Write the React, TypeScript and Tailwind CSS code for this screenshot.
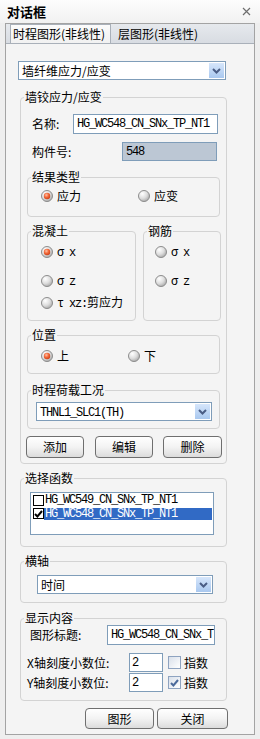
import React from "react";

const MONO = "font-['Liberation_Mono',monospace] text-[12px] tracking-[-1.2px]";

function RadioIcon({ on }: { on?: boolean }) {
  return (
    <svg width="12" height="12" viewBox="0 0 12 12" className="shrink-0 block">
      <defs>
        <radialGradient id="rgOff" cx="35%" cy="30%" r="75%">
          <stop offset="0%" stopColor="#ffffff" />
          <stop offset="55%" stopColor="#dedede" />
          <stop offset="100%" stopColor="#a9a9a9" />
        </radialGradient>
        <radialGradient id="rgOn" cx="40%" cy="35%" r="70%">
          <stop offset="0%" stopColor="#ffc2a6" />
          <stop offset="50%" stopColor="#f2693a" />
          <stop offset="100%" stopColor="#c93c14" />
        </radialGradient>
      </defs>
      <circle cx="6" cy="6" r="5.5" fill="url(#rgOff)" stroke="#8d8d8d" strokeWidth="1" />
      {on && <circle cx="6" cy="6" r="3.2" fill="url(#rgOn)" />}
    </svg>
  );
}

function Radio({ on, children, className = "" }: { on?: boolean; children: React.ReactNode; className?: string }) {
  return (
    <div className={`flex items-center h-[14px] ${className}`}>
      <RadioIcon on={on} />
      <span className="ml-[4px] whitespace-nowrap">{children}</span>
    </div>
  );
}

function Group({ label, className = "", children }: { label: string; className?: string; children?: React.ReactNode }) {
  return (
    <div className={`relative border border-[#d3d3d3] rounded-[4px] flex flex-col ${className}`}>
      <span className="absolute left-[3px] top-[-8px] px-[1px] bg-[#f4f4f4] leading-[14px] whitespace-nowrap">{label}</span>
      {children}
    </div>
  );
}

function Chevron() {
  return (
    <span className="w-[15px] h-[15px] mr-[1px] shrink-0 bg-gradient-to-b from-[#d6e6fb] to-[#a9c8ef] flex items-center justify-center">
      <svg width="9" height="6" viewBox="0 0 9 6">
        <path d="M1 1L4.5 4.5L8 1" stroke="#4a5d85" strokeWidth="2" fill="none" />
      </svg>
    </span>
  );
}

function Combo({ children, className = "" }: { children: React.ReactNode; className?: string }) {
  return (
    <div className={`h-[19px] border border-[#7f9db9] bg-white flex items-center ${className}`}>
      <span className="flex-1 pl-[3px] whitespace-nowrap leading-[14px]">{children}</span>
      <Chevron />
    </div>
  );
}

function Btn({ children, className = "" }: { children: React.ReactNode; className?: string }) {
  return (
    <div className={`flex items-center justify-center rounded-[4px] border border-[#6f6f6f] bg-gradient-to-b from-[#ffffff] via-[#f3f3f3] to-[#dcdcdc] ${className}`}>
      {children}
    </div>
  );
}

function CheckMark({ color }: { color: string }) {
  return (
    <svg width="9" height="8" viewBox="0 0 9 8" className="block">
      <path d="M1 4L3.4 6.5L8 1" stroke={color} strokeWidth="2" fill="none" />
    </svg>
  );
}

export default function App() {
  return (
    <div className="w-[260px] h-[739px] bg-[#eeeeee] text-black font-['Noto_Sans_CJK_SC',sans-serif] text-[12px] leading-[14px] overflow-hidden">
      {/* title bar */}
      <div className="h-[23px] flex items-center justify-between pl-[7px] pr-[9px] bg-gradient-to-b from-[#fdfdfd] to-[#f1f1f1]">
        <span className="font-bold text-[13px]">对话框</span>
        <svg width="9" height="9" viewBox="0 0 9 9" className="block">
          <path d="M1 1L8 8M8 1L1 8" stroke="#6e6e6e" strokeWidth="1.2" />
        </svg>
      </div>

      {/* frame */}
      <div className="ml-[5px] w-[250px] h-[712px] border border-[#a3a3a3] bg-[#f4f4f4] flex flex-col">
        {/* tab strip */}
        <div className="h-[20px] shrink-0 flex items-end bg-gradient-to-b from-[#e6e9ed] to-[#d8dce2] border-b border-[#a9b0b9] pl-[4px]">
          <div className="h-[19px] w-[101px] border-t border-l border-r border-[#a9b0b9] bg-gradient-to-b from-[#fbfbfb] to-[#f1f1f1] pl-[2px] flex items-center whitespace-nowrap">
            时程图形(非线性)
          </div>
          <div className="h-[19px] pl-[7px] flex items-center whitespace-nowrap">层图形(非线性)</div>
        </div>

        {/* content */}
        <div className="flex flex-col">
          <Combo className="mt-[17px] ml-[12px] w-[208px]">墙纤维应力/应变</Combo>

          {/* 墙铰应力/应变 */}
          <Group label="墙铰应力/应变" className="mt-[17px] ml-[14px] w-[207px] h-[367px]">
            <div className="mt-[16px] h-[20px] flex items-center">
              <span className="ml-[11px] w-[41px]">名称:</span>
              <div className={`w-[145px] h-[20px] border border-[#7f9db9] bg-white pl-[3px] flex items-center ${MONO}`}>
                HG_WC548_CN_SNx_TP_NT1
              </div>
            </div>
            <div className="mt-[8px] h-[19px] flex items-center">
              <span className="ml-[11px] w-[90px]">构件号:</span>
              <div className={`w-[95px] h-[19px] border border-[#7f9db9] bg-[#bcc7d4] pl-[3px] flex items-center ${MONO}`}>
                548
              </div>
            </div>

            <Group label="结果类型" className="mt-[16px] ml-[6px] w-[193px] h-[40px]">
              <div className="mt-[11px] flex">
                <Radio on className="ml-[13px] w-[97px]">应力</Radio>
                <Radio>应变</Radio>
              </div>
            </Group>

            <div className="mt-[14px] ml-[6px] flex">
              <Group label="混凝土" className="w-[109px] h-[90px]">
                <Radio on className="mt-[13px] ml-[13px]">
                  <span className={MONO}>σ x</span>
                </Radio>
                <Radio className="mt-[15px] ml-[13px]">
                  <span className={MONO}>σ z</span>
                </Radio>
                <Radio className="mt-[8px] ml-[13px]">
                  <span className={MONO}>τ xz:</span>剪应力
                </Radio>
              </Group>
              <Group label="钢筋" className="ml-[7px] w-[78px] h-[90px]">
                <Radio className="mt-[13px] ml-[11px]">
                  <span className={MONO}>σ x</span>
                </Radio>
                <Radio className="mt-[15px] ml-[11px]">
                  <span className={MONO}>σ z</span>
                </Radio>
              </Group>
            </div>

            <Group label="位置" className="mt-[14px] ml-[6px] w-[193px] h-[39px]">
              <div className="mt-[13px] flex">
                <Radio on className="ml-[13px] w-[87px]">上</Radio>
                <Radio>下</Radio>
              </div>
            </Group>

            <Group label="时程荷载工况" className="mt-[16px] ml-[6px] w-[193px] h-[39px]">
              <Combo className="mt-[11px] ml-[8px] w-[176px]">
                <span className={MONO}>THNL1_SLC1(TH)</span>
              </Combo>
            </Group>

            <div className="mt-[7px] flex">
              <Btn className="ml-[5px] w-[58px] h-[22px]">添加</Btn>
              <Btn className="ml-[11px] w-[58px] h-[22px]">编辑</Btn>
              <Btn className="ml-[10px] w-[59px] h-[22px]">删除</Btn>
            </div>
          </Group>

          {/* 选择函数 */}
          <Group label="选择函数" className="mt-[14px] ml-[14px] w-[207px] h-[69px]">
            <div className="mt-[13px] ml-[9px] w-[184px] h-[43px] border border-[#7f9db9] bg-white pt-[1px] pl-[2px] pr-[1px] flex flex-col">
              <div className="h-[13px] flex items-center">
                <span className="w-[11px] h-[11px] border border-black bg-white shrink-0" />
                <span className={`pl-[1px] whitespace-nowrap ${MONO} leading-[13px]`}>HG_WC549_CN_SNx_TP_NT1</span>
              </div>
              <div className="h-[13px] flex items-center">
                <span className="w-[11px] h-[11px] border border-black bg-white shrink-0 flex items-center justify-center">
                  <CheckMark color="#000000" />
                </span>
                <span className={`flex-1 h-[12px] pl-[1px] bg-[#316ac5] text-white whitespace-nowrap ${MONO} leading-[12px]`}>
                  HG_WC548_CN_SNx_TP_NT1
                </span>
              </div>
            </div>
          </Group>

          {/* 横轴 */}
          <Group label="横轴" className="mt-[14px] ml-[14px] w-[207px] h-[42px]">
            <Combo className="mt-[13px] ml-[16px] w-[176px]">时间</Combo>
          </Group>

          {/* 显示内容 */}
          <Group label="显示内容" className="mt-[15px] ml-[14px] w-[207px] h-[83px]">
            <div className="mt-[6px] h-[20px] flex items-center">
              <span className="ml-[9px] w-[77px] whitespace-nowrap">图形标题:</span>
              <div className={`w-[108px] h-[20px] border border-[#7f9db9] bg-white pl-[3px] flex items-center overflow-hidden whitespace-nowrap ${MONO}`}>
                HG_WC548_CN_SNx_T
              </div>
            </div>
            <div className="mt-[8px] h-[19px] flex items-center">
              <span className="ml-[6px] w-[102px] whitespace-nowrap">X轴刻度小数位:</span>
              <div className={`w-[34px] h-[19px] border border-[#7f9db9] bg-white pl-[2px] flex items-center ${MONO}`}>2</div>
              <span className="ml-[5px] w-[13px] h-[13px] border border-[#8ea3c0] bg-gradient-to-br from-[#d9e0ea] to-[#ffffff]" />
              <span className="ml-[3px]">指数</span>
            </div>
            <div className="mt-[1px] h-[19px] flex items-center">
              <span className="ml-[6px] w-[102px] whitespace-nowrap">Y轴刻度小数位:</span>
              <div className={`w-[34px] h-[19px] border border-[#7f9db9] bg-white pl-[2px] flex items-center ${MONO}`}>2</div>
              <span className="ml-[5px] w-[13px] h-[13px] border border-[#8ea3c0] bg-gradient-to-br from-[#d9e0ea] to-[#ffffff] flex items-center justify-center">
                <CheckMark color="#4b6a9b" />
              </span>
              <span className="ml-[3px]">指数</span>
            </div>
          </Group>

          <div className="mt-[7px] flex">
            <Btn className="ml-[79px] w-[69px] h-[21px]">图形</Btn>
            <Btn className="ml-[3px] w-[71px] h-[21px]">关闭</Btn>
          </div>
        </div>
      </div>
    </div>
  );
}
